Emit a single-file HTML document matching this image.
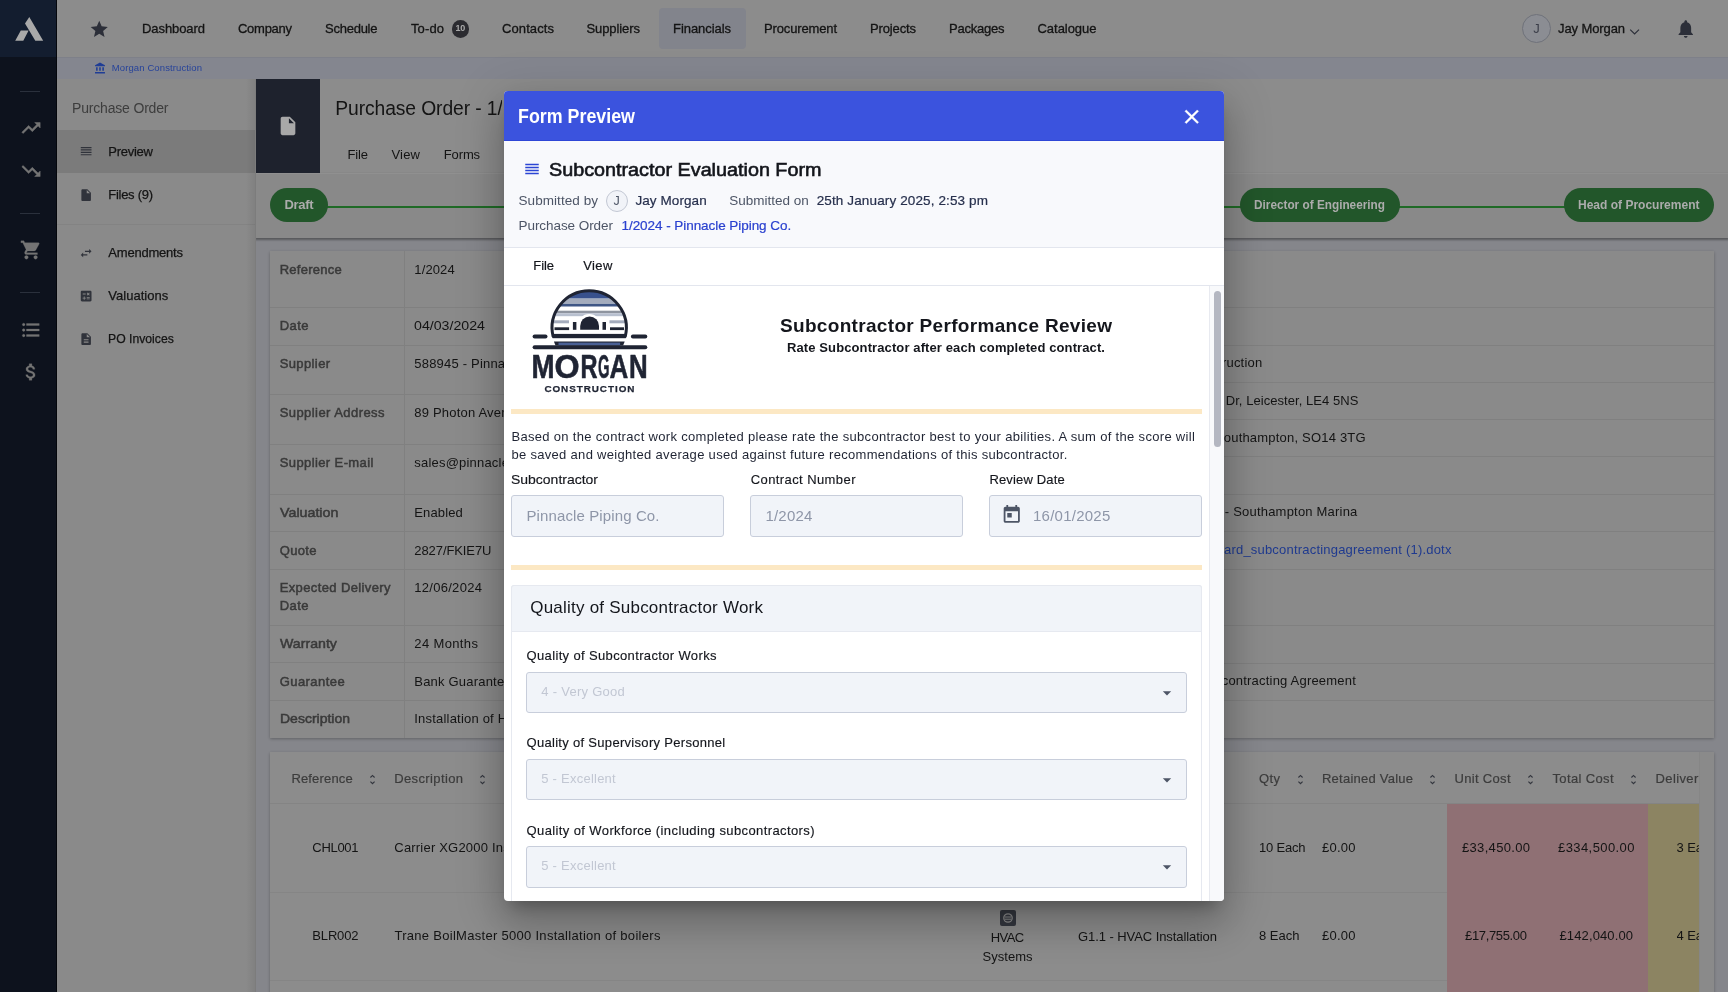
<!DOCTYPE html>
<html lang="en"><head><meta charset="utf-8"><title>Purchase Order - Form Preview</title>
<style>
html,body{margin:0;padding:0;}
body{width:1728px;height:992px;overflow:hidden;position:relative;background:#85868b;font-family:"Liberation Sans", sans-serif;}
#wrap{position:absolute;left:0;top:0;width:1728px;height:992px;overflow:hidden;will-change:transform;opacity:.999;}
.b{position:absolute;box-sizing:border-box;display:block;}
.t{position:absolute;white-space:nowrap;line-height:1;font-family:"Liberation Sans", sans-serif;}
</style></head><body>
<div id="wrap"><div class="b" style="left:255px;top:79px;width:1473px;height:94px;background:#8c8c8c;"></div><span class="t" style="left:335.30px;top:98.77px;font-size:19.3px;color:#141414;letter-spacing:-0.102px;width:167.2px;overflow:hidden;padding:3px 0;margin-top:-3px;">Purchase Order - 1/2024 - Pinnacle Piping Co.</span><span class="t" style="left:347.50px;top:147.85px;font-size:13px;color:#141414;letter-spacing:-0.151px;">File</span><span class="t" style="left:391.50px;top:147.85px;font-size:13px;color:#141414;letter-spacing:0.182px;">View</span><span class="t" style="left:443.80px;top:147.85px;font-size:13px;color:#141414;letter-spacing:-0.136px;">Forms</span><div class="b" style="left:255px;top:173px;width:1473px;height:64.5px;background:#898989;border-top:1px solid #909090;box-shadow:0 1px 2px 0.5px rgba(0,0,0,.35);"></div><div class="b" style="left:300px;top:205.5px;width:1300px;height:2px;background:#1f6a26;"></div><div class="b" style="left:270px;top:187.6px;width:58px;height:34px;background:#22562a;border-radius:17px;"></div><span class="t" style="left:284.50px;top:198.15px;font-size:13px;color:#acacac;letter-spacing:-0.336px;font-weight:700;">Draft</span><div class="b" style="left:1240px;top:187.6px;width:160px;height:34px;background:#22562a;border-radius:17px;"></div><span class="t" style="left:1254.40px;top:198.15px;font-size:13px;color:#acacac;letter-spacing:0.000px;font-weight:700;transform:scaleX(0.9068);transform-origin:0 50%;">Director of Engineering</span><div class="b" style="left:1563.5px;top:187.6px;width:150px;height:34px;background:#22562a;border-radius:17px;"></div><span class="t" style="left:1578.00px;top:198.15px;font-size:13px;color:#acacac;letter-spacing:0.000px;font-weight:700;transform:scaleX(0.9241);transform-origin:0 50%;">Head of Procurement</span><div class="b" style="left:270px;top:251px;width:1443.5px;height:487px;background:#8a8a8a;box-shadow:0 1px 3px rgba(0,0,0,.28);"></div><div class="b" style="left:404px;top:251px;width:1px;height:487px;background:#808080;"></div><div class="b" style="left:270px;top:307px;width:722px;height:1px;background:#808080;"></div><div class="b" style="left:270px;top:344.8px;width:722px;height:1px;background:#808080;"></div><div class="b" style="left:270px;top:394.2px;width:722px;height:1px;background:#808080;"></div><div class="b" style="left:270px;top:444px;width:722px;height:1px;background:#808080;"></div><div class="b" style="left:270px;top:494px;width:722px;height:1px;background:#808080;"></div><div class="b" style="left:270px;top:531.2px;width:722px;height:1px;background:#808080;"></div><div class="b" style="left:270px;top:569px;width:722px;height:1px;background:#808080;"></div><div class="b" style="left:270px;top:625px;width:722px;height:1px;background:#808080;"></div><div class="b" style="left:270px;top:662.2px;width:722px;height:1px;background:#808080;"></div><div class="b" style="left:270px;top:700px;width:722px;height:1px;background:#808080;"></div><div class="b" style="left:992px;top:307px;width:721.5px;height:1px;background:#808080;"></div><div class="b" style="left:992px;top:344.5px;width:721.5px;height:1px;background:#808080;"></div><div class="b" style="left:992px;top:382px;width:721.5px;height:1px;background:#808080;"></div><div class="b" style="left:992px;top:419px;width:721.5px;height:1px;background:#808080;"></div><div class="b" style="left:992px;top:456.3px;width:721.5px;height:1px;background:#808080;"></div><div class="b" style="left:992px;top:494px;width:721.5px;height:1px;background:#808080;"></div><div class="b" style="left:992px;top:531.2px;width:721.5px;height:1px;background:#808080;"></div><div class="b" style="left:992px;top:569px;width:721.5px;height:1px;background:#808080;"></div><div class="b" style="left:992px;top:625px;width:721.5px;height:1px;background:#808080;"></div><div class="b" style="left:992px;top:662.5px;width:721.5px;height:1px;background:#808080;"></div><div class="b" style="left:992px;top:700px;width:721.5px;height:1px;background:#808080;"></div><span class="t" style="left:279.70px;top:262.75px;font-size:13px;color:#3a3a3a;letter-spacing:0.252px;-webkit-text-stroke:0.5px #3a3a3a;">Reference</span><span class="t" style="left:414.30px;top:262.75px;font-size:13px;color:#141414;letter-spacing:0.127px;">1/2024</span><span class="t" style="left:279.70px;top:318.75px;font-size:13px;color:#3a3a3a;letter-spacing:0.410px;-webkit-text-stroke:0.5px #3a3a3a;">Date</span><span class="t" style="left:414.30px;top:318.75px;font-size:13px;color:#141414;letter-spacing:0.000px;transform:scaleX(1.0910);transform-origin:0 50%;">04/03/2024</span><span class="t" style="left:279.70px;top:356.75px;font-size:13px;color:#3a3a3a;letter-spacing:0.385px;-webkit-text-stroke:0.5px #3a3a3a;">Supplier</span><span class="t" style="left:414.30px;top:356.75px;font-size:13px;color:#141414;letter-spacing:0.200px;">588945 - Pinnacle Piping Co.</span><span class="t" style="left:279.70px;top:405.75px;font-size:13px;color:#3a3a3a;letter-spacing:0.435px;-webkit-text-stroke:0.5px #3a3a3a;">Supplier Address</span><span class="t" style="left:414.30px;top:405.75px;font-size:13px;color:#141414;letter-spacing:0.200px;">89 Photon Avenue, Leeds, LS11 8PG</span><span class="t" style="left:279.70px;top:455.75px;font-size:13px;color:#3a3a3a;letter-spacing:0.396px;-webkit-text-stroke:0.5px #3a3a3a;">Supplier E-mail</span><span class="t" style="left:414.30px;top:455.75px;font-size:13px;color:#141414;letter-spacing:0.200px;">sales@pinnaclepiping.co.uk</span><span class="t" style="left:279.70px;top:505.75px;font-size:13px;color:#3a3a3a;letter-spacing:0.000px;-webkit-text-stroke:0.5px #3a3a3a;transform:scaleX(1.0967);transform-origin:0 50%;">Valuation</span><span class="t" style="left:414.30px;top:505.75px;font-size:13px;color:#141414;letter-spacing:0.130px;">Enabled</span><span class="t" style="left:279.70px;top:543.75px;font-size:13px;color:#3a3a3a;letter-spacing:0.345px;-webkit-text-stroke:0.5px #3a3a3a;">Quote</span><span class="t" style="left:414.30px;top:543.75px;font-size:13px;color:#141414;letter-spacing:-0.085px;">2827/FKIE7U</span><span class="t" style="left:279.70px;top:581.25px;font-size:13px;color:#3a3a3a;letter-spacing:0.376px;-webkit-text-stroke:0.5px #3a3a3a;">Expected Delivery</span><span class="t" style="left:414.30px;top:581.25px;font-size:13px;color:#141414;letter-spacing:0.280px;">12/06/2024</span><span class="t" style="left:279.70px;top:636.75px;font-size:13px;color:#3a3a3a;letter-spacing:0.000px;-webkit-text-stroke:0.5px #3a3a3a;transform:scaleX(1.0890);transform-origin:0 50%;">Warranty</span><span class="t" style="left:414.30px;top:636.75px;font-size:13px;color:#141414;letter-spacing:0.362px;">24 Months</span><span class="t" style="left:279.70px;top:674.75px;font-size:13px;color:#3a3a3a;letter-spacing:0.445px;-webkit-text-stroke:0.5px #3a3a3a;">Guarantee</span><span class="t" style="left:414.30px;top:674.75px;font-size:13px;color:#141414;letter-spacing:0.200px;">Bank Guarantee</span><span class="t" style="left:279.70px;top:712.25px;font-size:13px;color:#3a3a3a;letter-spacing:0.000px;-webkit-text-stroke:0.5px #3a3a3a;transform:scaleX(1.0764);transform-origin:0 50%;">Description</span><span class="t" style="left:414.30px;top:712.25px;font-size:13px;color:#141414;letter-spacing:0.200px;">Installation of HVAC plant and pipework</span><span class="t" style="left:279.70px;top:599.45px;font-size:13px;color:#3a3a3a;letter-spacing:0.410px;-webkit-text-stroke:0.5px #3a3a3a;">Date</span><span class="t" style="right:465.80px;top:356.45px;font-size:13px;color:#141414;letter-spacing:0.200px;margin-right:-0.200px;">Morgan Construction</span><span class="t" style="right:369.60px;top:393.75px;font-size:13px;color:#141414;letter-spacing:0.056px;margin-right:-0.056px;">12 Enterprise Dr, Leicester, LE4 5NS</span><span class="t" style="right:362.40px;top:430.95px;font-size:13px;color:#141414;letter-spacing:0.200px;margin-right:-0.200px;">Ocean Village, Southampton, SO14 3TG</span><span class="t" style="right:370.70px;top:505.45px;font-size:13px;color:#141414;letter-spacing:0.200px;margin-right:-0.200px;">SM-0012 - Southampton Marina</span><span class="t" style="right:276.60px;top:543.45px;font-size:13px;color:#1f3a8f;letter-spacing:0.200px;margin-right:-0.200px;">standard_subcontractingagreement (1).dotx</span><span class="t" style="right:372.20px;top:674.45px;font-size:13px;color:#141414;letter-spacing:0.200px;margin-right:-0.200px;">Subcontracting Agreement</span><div class="b" style="left:270px;top:752.4px;width:1443.5px;height:260px;background:#8a8a8a;box-shadow:0 1px 3px rgba(0,0,0,.28);"></div><div class="b" style="left:270px;top:752.4px;width:1429px;height:52px;background:#8c8c8c;border-bottom:1px solid #848484;"></div><div class="b" style="left:1699px;top:752.4px;width:14.5px;height:260px;background:#8a8a8a;border-left:1px solid #868686;"></div><div class="b" style="left:270px;top:804.4px;width:1429px;height:89px;background:#8c8c8c;border-bottom:1px solid #858585;"></div><div class="b" style="left:270px;top:893.4px;width:1429px;height:88px;background:#8c8c8c;border-bottom:1px solid #858585;"></div><div class="b" style="left:270px;top:981.4px;width:1429px;height:20px;background:#8c8c8c;"></div><div class="b" style="left:1447px;top:804px;width:201px;height:200px;background:#8f7074;"></div><div class="b" style="left:1648px;top:804px;width:51px;height:200px;background:#8c8462;"></div><span class="t" style="left:291.40px;top:772.45px;font-size:13px;color:#3c3c3c;letter-spacing:0.164px;-webkit-text-stroke:0.2px #3c3c3c;">Reference</span><svg class="b" style="left:366.00px;top:773.00px;" width="13" height="13" viewBox="0 0 24 24"><path fill="#33363e" d="M12 5.83L15.17 9l1.41-1.41L12 3 7.41 7.59 8.83 9 12 5.83zm0 12.34L8.83 15l-1.41 1.41L12 21l4.59-4.59L15.17 15 12 18.17z"/></svg><span class="t" style="left:394.20px;top:772.45px;font-size:13px;color:#3c3c3c;letter-spacing:0.377px;-webkit-text-stroke:0.2px #3c3c3c;">Description</span><svg class="b" style="left:476.10px;top:773.00px;" width="13" height="13" viewBox="0 0 24 24"><path fill="#33363e" d="M12 5.83L15.17 9l1.41-1.41L12 3 7.41 7.59 8.83 9 12 5.83zm0 12.34L8.83 15l-1.41 1.41L12 21l4.59-4.59L15.17 15 12 18.17z"/></svg><span class="t" style="left:1259.00px;top:772.45px;font-size:13px;color:#3c3c3c;letter-spacing:0.383px;-webkit-text-stroke:0.2px #3c3c3c;">Qty</span><svg class="b" style="left:1293.50px;top:773.00px;" width="13" height="13" viewBox="0 0 24 24"><path fill="#33363e" d="M12 5.83L15.17 9l1.41-1.41L12 3 7.41 7.59 8.83 9 12 5.83zm0 12.34L8.83 15l-1.41 1.41L12 21l4.59-4.59L15.17 15 12 18.17z"/></svg><span class="t" style="left:1322.00px;top:772.45px;font-size:13px;color:#3c3c3c;letter-spacing:0.236px;-webkit-text-stroke:0.2px #3c3c3c;">Retained Value</span><svg class="b" style="left:1426.00px;top:773.00px;" width="13" height="13" viewBox="0 0 24 24"><path fill="#33363e" d="M12 5.83L15.17 9l1.41-1.41L12 3 7.41 7.59 8.83 9 12 5.83zm0 12.34L8.83 15l-1.41 1.41L12 21l4.59-4.59L15.17 15 12 18.17z"/></svg><span class="t" style="left:1454.50px;top:772.45px;font-size:13px;color:#3c3c3c;letter-spacing:0.316px;-webkit-text-stroke:0.2px #3c3c3c;">Unit Cost</span><svg class="b" style="left:1523.50px;top:773.00px;" width="13" height="13" viewBox="0 0 24 24"><path fill="#33363e" d="M12 5.83L15.17 9l1.41-1.41L12 3 7.41 7.59 8.83 9 12 5.83zm0 12.34L8.83 15l-1.41 1.41L12 21l4.59-4.59L15.17 15 12 18.17z"/></svg><span class="t" style="left:1552.50px;top:772.45px;font-size:13px;color:#3c3c3c;letter-spacing:0.354px;-webkit-text-stroke:0.2px #3c3c3c;">Total Cost</span><svg class="b" style="left:1627.00px;top:773.00px;" width="13" height="13" viewBox="0 0 24 24"><path fill="#33363e" d="M12 5.83L15.17 9l1.41-1.41L12 3 7.41 7.59 8.83 9 12 5.83zm0 12.34L8.83 15l-1.41 1.41L12 21l4.59-4.59L15.17 15 12 18.17z"/></svg><div class="b" style="left:1655.5px;top:765px;width:43.5px;height:30px;overflow:hidden;"><span class="t" style="left:0.00px;top:7.45px;font-size:13px;color:#3c3c3c;letter-spacing:0.385px;-webkit-text-stroke:0.2px #3c3c3c;">Delivered</span></div><span class="t" style="left:312.30px;top:840.95px;font-size:13px;color:#141414;letter-spacing:-0.301px;">CHL001</span><span class="t" style="left:394.30px;top:840.95px;font-size:13px;color:#141414;letter-spacing:0.200px;">Carrier XG2000 Installation of chillers</span><span class="t" style="left:1259.00px;top:840.95px;font-size:13px;color:#141414;letter-spacing:-0.201px;">10 Each</span><span class="t" style="left:1322.00px;top:840.95px;font-size:13px;color:#141414;letter-spacing:0.238px;">£0.00</span><span class="t" style="left:1462.00px;top:840.95px;font-size:13px;color:#141414;letter-spacing:0.325px;">£33,450.00</span><span class="t" style="left:1558.00px;top:840.95px;font-size:13px;color:#141414;letter-spacing:0.420px;">£334,500.00</span><div class="b" style="left:1676.5px;top:835px;width:22.5px;height:26px;overflow:hidden;"><span class="t" style="left:0.00px;top:5.95px;font-size:13px;color:#141414;letter-spacing:-0.097px;">3 Each</span></div><span class="t" style="left:312.30px;top:929.45px;font-size:13px;color:#141414;letter-spacing:-0.157px;">BLR002</span><span class="t" style="left:394.40px;top:929.45px;font-size:13px;color:#141414;letter-spacing:0.292px;">Trane BoilMaster 5000 Installation of boilers</span><div class="b" style="left:999.6px;top:909.8px;width:16px;height:16px;background:#33363e;border-radius:2px;"></div><svg class="b" style="left:999.6px;top:909.8px" width="16" height="16" viewBox="0 0 16 16"><circle cx="8" cy="8" r="4.2" fill="none" stroke="#8c8c8c" stroke-width="1.3"/><path d="M5 7h6M5 9.2h6" stroke="#8c8c8c" stroke-width="1"/></svg><span class="t" style="left:990.70px;top:930.65px;font-size:13px;color:#141414;letter-spacing:-0.552px;">HVAC</span><span class="t" style="left:982.60px;top:950.05px;font-size:13px;color:#141414;letter-spacing:0.026px;">Systems</span><span class="t" style="left:1078.00px;top:929.55px;font-size:13px;color:#141414;letter-spacing:-0.072px;">G1.1 - HVAC Installation</span><span class="t" style="left:1259.00px;top:929.45px;font-size:13px;color:#141414;letter-spacing:0.003px;">8 Each</span><span class="t" style="left:1322.00px;top:929.45px;font-size:13px;color:#141414;letter-spacing:0.238px;">£0.00</span><span class="t" style="left:1465.00px;top:929.45px;font-size:13px;color:#141414;letter-spacing:-0.342px;">£17,755.00</span><span class="t" style="left:1559.50px;top:929.45px;font-size:13px;color:#141414;letter-spacing:0.120px;">£142,040.00</span><div class="b" style="left:1676.5px;top:923.5px;width:22.5px;height:26px;overflow:hidden;"><span class="t" style="left:0.00px;top:5.95px;font-size:13px;color:#141414;letter-spacing:-0.097px;">4 Each</span></div><div class="b" style="left:57px;top:58px;width:1671px;height:21px;background:#84868f;"></div><svg class="b" style="left:94.35px;top:61.95px;" width="12.5" height="12.5" viewBox="0 0 24 24"><path fill="#1f3d96" d="M4 10v7h3v-7H4zm6 0v7h3v-7h-3zM2 22h19v-3H2v3zm14-12v7h3v-7h-3zm-4.5-9L2 6v2h19V6l-9.5-5z"/></svg><span class="t" style="left:111.75px;top:63.46px;font-size:9.5px;color:#27439a;letter-spacing:0.112px;">Morgan Construction</span><div class="b" style="left:57px;top:79px;width:198px;height:913px;background:#8a8a8a;"></div><span class="t" style="left:72.00px;top:101.36px;font-size:14px;color:#3d3d3d;letter-spacing:-0.179px;">Purchase Order</span><div class="b" style="left:57px;top:130px;width:198px;height:43px;background:#7b7b7b;"></div><div class="b" style="left:57px;top:223.5px;width:198px;height:1px;background:#838383;"></div><svg class="b" style="left:79.45px;top:144.25px;" width="14.3" height="14.3" viewBox="0 0 24 24"><path fill="#30333b" d="M3 15h18v-2H3v2zm0 4h18v-2H3v2zm0-8h18V9H3v2zm0-6v2h18V5H3z"/></svg><span class="t" style="left:108.30px;top:145.35px;font-size:13px;color:#141414;letter-spacing:-0.275px;-webkit-text-stroke:0.25px #141414;">Preview</span><svg class="b" style="left:79.45px;top:187.75px;" width="14.3" height="14.3" viewBox="0 0 24 24"><path fill="#30333b" d="M6 2c-1.1 0-1.99.9-1.99 2L4 20c0 1.1.89 2 1.99 2H18c1.1 0 2-.9 2-2V8l-6-6H6zm7 7V3.5L18.5 9H13z"/></svg><span class="t" style="left:108.30px;top:187.95px;font-size:13px;color:#141414;letter-spacing:-0.282px;-webkit-text-stroke:0.25px #141414;">Files (9)</span><svg class="b" style="left:79.45px;top:246.10px;" width="14.3" height="14.3" viewBox="0 0 24 24"><path fill="#30333b" d="M6.99 11L3 15l3.99 4v-3H14v-2H6.99v-3zM21 9l-3.99-4v3H10v2h7.01v3L21 9z"/></svg><span class="t" style="left:108.30px;top:246.45px;font-size:13px;color:#141414;letter-spacing:-0.210px;-webkit-text-stroke:0.25px #141414;">Amendments</span><svg class="b" style="left:79.45px;top:288.65px;" width="14.3" height="14.3" viewBox="0 0 24 24"><path fill="#30333b" d="M19 3H5c-1.1 0-2 .9-2 2v14c0 1.1.9 2 2 2h14c1.1 0 2-.9 2-2V5c0-1.1-.9-2-2-2zm-5.97 4.06L14.09 6l1.41 1.41L16.91 6l1.06 1.06-1.41 1.41 1.41 1.41-1.06 1.06-1.41-1.4-1.41 1.41-1.06-1.06 1.41-1.41-1.41-1.42zm-6.78.66h5v1.5h-5v-1.5zM11.5 16h-2v2H8v-2H6v-1.5h2v-2h1.5v2h2V16zm6.5 1.25h-5v-1.5h5v1.5zm0-2.5h-5v-1.5h5v1.5z"/></svg><span class="t" style="left:108.30px;top:289.45px;font-size:13px;color:#141414;letter-spacing:0.028px;-webkit-text-stroke:0.25px #141414;">Valuations</span><svg class="b" style="left:79.45px;top:332.15px;" width="14.3" height="14.3" viewBox="0 0 24 24"><path fill="#30333b" d="M14 2H6c-1.1 0-1.99.9-1.99 2L4 20c0 1.1.89 2 1.99 2H18c1.1 0 2-.9 2-2V8l-6-6zm2 16H8v-2h8v2zm0-4H8v-2h8v2zm-3-5V3.5L18.5 9H13z"/></svg><span class="t" style="left:108.30px;top:332.35px;font-size:13px;color:#141414;letter-spacing:0.000px;-webkit-text-stroke:0.25px #141414;transform:scaleX(0.9387);transform-origin:0 50%;">PO Invoices</span><div class="b" style="left:246px;top:79px;width:9px;height:913px;background:linear-gradient(90deg,rgba(0,0,0,0),rgba(0,0,0,.07));"></div><div class="b" style="left:254.5px;top:79px;width:1.5px;height:913px;background:#7c7c7c;"></div><div class="b" style="left:256px;top:79px;width:64px;height:94px;background:#1e222d;"></div><svg class="b" style="left:277.00px;top:115.00px;" width="22" height="22" viewBox="0 0 24 24"><path fill="#a8a8a8" d="M6 2c-1.1 0-1.99.9-1.99 2L4 20c0 1.1.89 2 1.99 2H18c1.1 0 2-.9 2-2V8l-6-6H6zm7 7V3.5L18.5 9H13z"/></svg><div class="b" style="left:57px;top:0px;width:1671px;height:58px;background:#8c8c8c;border-bottom:1px solid #7e8089;"></div><svg class="b" style="left:89.25px;top:18.55px;" width="20.5" height="20.5" viewBox="0 0 24 24"><path fill="#2c2f39" d="M12 17.27L18.18 21l-1.64-7.03L22 9.24l-7.19-.61L12 2 9.19 8.63 2 9.24l5.46 4.73L5.82 21z"/></svg><div class="b" style="left:659px;top:8px;width:86.5px;height:41px;background:#82848c;border-radius:4px;"></div><span class="t" style="left:142.00px;top:22.05px;font-size:13px;color:#141414;letter-spacing:-0.076px;-webkit-text-stroke:0.3px #141414;">Dashboard</span><span class="t" style="left:238.00px;top:22.05px;font-size:13px;color:#141414;letter-spacing:-0.273px;-webkit-text-stroke:0.3px #141414;">Company</span><span class="t" style="left:325.00px;top:22.05px;font-size:13px;color:#141414;letter-spacing:-0.246px;-webkit-text-stroke:0.3px #141414;">Schedule</span><span class="t" style="left:411.00px;top:22.05px;font-size:13px;color:#141414;letter-spacing:0.117px;-webkit-text-stroke:0.3px #141414;">To-do</span><span class="t" style="left:502.00px;top:22.05px;font-size:13px;color:#141414;letter-spacing:0.098px;-webkit-text-stroke:0.3px #141414;">Contacts</span><span class="t" style="left:586.50px;top:22.05px;font-size:13px;color:#141414;letter-spacing:-0.088px;-webkit-text-stroke:0.3px #141414;">Suppliers</span><span class="t" style="left:673.00px;top:22.05px;font-size:13px;color:#141414;letter-spacing:-0.059px;-webkit-text-stroke:0.3px #141414;">Financials</span><span class="t" style="left:764.00px;top:22.05px;font-size:13px;color:#141414;letter-spacing:-0.142px;-webkit-text-stroke:0.3px #141414;">Procurement</span><span class="t" style="left:870.00px;top:22.05px;font-size:13px;color:#141414;letter-spacing:-0.138px;-webkit-text-stroke:0.3px #141414;">Projects</span><span class="t" style="left:949.00px;top:22.05px;font-size:13px;color:#141414;letter-spacing:-0.228px;-webkit-text-stroke:0.3px #141414;">Packages</span><span class="t" style="left:1037.50px;top:22.05px;font-size:13px;color:#141414;letter-spacing:-0.035px;-webkit-text-stroke:0.3px #141414;">Catalogue</span><div class="b" style="left:451.5px;top:20px;width:17.5px;height:17.5px;background:#2b2b30;border-radius:50%;"></div><span class="t" style="left:455.60px;top:24.30px;font-size:9px;color:#a9a9a9;letter-spacing:-0.416px;font-weight:700;">10</span><div class="b" style="left:1522px;top:14px;width:29px;height:29px;background:#8b8d93;border-radius:50%;border:1px solid #6f727a;"></div><span class="t" style="left:1533.30px;top:22.05px;font-size:13px;color:#3a3d48;letter-spacing:0.000px;">J</span><span class="t" style="left:1558.00px;top:22.05px;font-size:13px;color:#141414;letter-spacing:-0.102px;-webkit-text-stroke:0.3px #141414;">Jay Morgan</span><svg class="b" style="left:1628px;top:26px" width="14" height="12" viewBox="0 0 14 12"><path d="M2.2 3.6L6.6 8l4.4-4.4" fill="none" stroke="#2c2f39" stroke-width="1.2"/></svg><svg class="b" style="left:1675.25px;top:18.25px;" width="21.5" height="21.5" viewBox="0 0 24 24"><path fill="#2c2f39" d="M12 22c1.1 0 2-.9 2-2h-4c0 1.1.89 2 2 2zm6-6v-5c0-3.07-1.64-5.64-4.5-6.32V4c0-.83-.67-1.5-1.5-1.5s-1.5.67-1.5 1.5v.68C7.63 5.36 6 7.92 6 11v5l-2 2v1h16v-1l-2-2z"/></svg><div class="b" style="left:0px;top:0px;width:57px;height:992px;background:#0d121d;border-right:1px solid #05070c;"></div><div class="b" style="left:0px;top:0px;width:56px;height:57.3px;background:#131d2f;"></div><svg class="b" style="left:0;top:0" width="57" height="57" viewBox="0 0 57 57"><path fill="#a9a9a9" d="M29.3 16.9L43.2 40.8H35.3L25 23.6zM20.8 30.5H28.6L23.3 40.8H15.2z"/></svg><div class="b" style="left:20px;top:90.6px;width:20px;height:1px;background:#2a303c;"></div><div class="b" style="left:20px;top:212.8px;width:20px;height:1px;background:#2a303c;"></div><div class="b" style="left:20px;top:291.8px;width:20px;height:1px;background:#2a303c;"></div><svg class="b" style="left:20.00px;top:117.20px;" width="22" height="22" viewBox="0 0 24 24"><path fill="#747474" stroke="#747474" stroke-width="0.5" stroke-linejoin="round" d="M16 6l2.29 2.29-4.88 4.88-4-4L2 16.59 3.41 18l6-6 4 4 6.3-6.29L22 12V6z"/></svg><svg class="b" style="left:20.00px;top:160.30px;" width="22" height="22" viewBox="0 0 24 24"><path fill="#747474" stroke="#747474" stroke-width="0.5" stroke-linejoin="round" d="M16 18l2.29-2.29-4.88-4.88-4 4L2 7.41 3.41 6l6 6 4-4 6.3 6.29L22 12v6z"/></svg><svg class="b" style="left:19.60px;top:239.00px;" width="22" height="22" viewBox="0 0 24 24"><path fill="#747474" stroke="#747474" stroke-width="0.3" stroke-linejoin="round" d="M7 18c-1.1 0-1.99.9-1.99 2S5.9 22 7 22s2-.9 2-2-.9-2-2-2zM1 2v2h2l3.6 7.59-1.35 2.45c-.16.28-.25.61-.25.96 0 1.1.9 2 2 2h12v-2H7.42c-.14 0-.25-.11-.25-.25l.03-.12.9-1.63h7.45c.75 0 1.41-.41 1.75-1.03l3.58-6.49c.08-.14.12-.31.12-.48 0-.55-.45-1-1-1H5.21l-.94-2H1zm16 16c-1.1 0-1.99.9-1.99 2s.89 2 1.99 2 2-.9 2-2-.9-2-2-2z"/></svg><svg class="b" style="left:19.80px;top:318.50px;" width="22" height="22" viewBox="0 0 24 24"><path fill="#747474" stroke="#747474" stroke-width="0.3" stroke-linejoin="round" d="M4 10.5c-.83 0-1.5.67-1.5 1.5s.67 1.5 1.5 1.5 1.5-.67 1.5-1.5-.67-1.5-1.5-1.5zm0-6c-.83 0-1.5.67-1.5 1.5S3.17 7.5 4 7.5 5.5 6.83 5.5 6 4.83 4.5 4 4.5zm0 12c-.83 0-1.5.68-1.5 1.5s.68 1.5 1.5 1.5 1.5-.68 1.5-1.5-.67-1.5-1.5-1.5zM7 19h14v-2H7v2zm0-6h14v-2H7v2zm0-8v2h14V5H7z"/></svg><svg class="b" style="left:19.70px;top:361.20px;" width="22" height="22" viewBox="0 0 24 24"><path fill="#747474" stroke="#747474" stroke-width="0.3" stroke-linejoin="round" d="M11.8 10.9c-2.27-.59-3-1.2-3-2.15 0-1.09 1.01-1.85 2.7-1.85 1.78 0 2.44.85 2.5 2.1h2.21c-.07-1.72-1.12-3.3-3.21-3.81V3h-3v2.16c-1.94.42-3.5 1.68-3.5 3.61 0 2.31 1.91 3.46 4.7 4.13 2.5.6 3 1.48 3 2.41 0 .69-.49 1.79-2.7 1.79-2.06 0-2.87-.92-2.98-2.1h-2.2c.12 2.19 1.76 3.42 3.68 3.83V21h3v-2.15c1.95-.37 3.5-1.5 3.5-3.55 0-2.84-2.43-3.81-4.7-4.4z"/></svg><div class="b" style="left:504px;top:91px;width:720px;height:810px;background:#ffffff;border-radius:4px;box-shadow:0 11px 15px -7px rgba(0,0,0,.26),0 24px 38px 3px rgba(0,0,0,.16),0 9px 46px 8px rgba(0,0,0,.13);"></div><div class="b" style="left:504px;top:91px;width:720px;height:50px;background:#3b53de;border-radius:4px 4px 0 0;border-bottom:1px solid #2e46d6;"></div><span class="t" style="left:518.30px;top:106.23px;font-size:20px;color:#ffffff;letter-spacing:0.000px;font-weight:700;transform:scaleX(0.8920);transform-origin:0 50%;">Form Preview</span><svg class="b" style="left:1179.95px;top:104.50px;" width="23.5" height="23.5" viewBox="0 0 24 24"><path fill="#ffffff" stroke="#ffffff" stroke-width="0.4" stroke-linejoin="round" d="M19 6.41L17.59 5 12 10.59 6.41 5 5 6.41 10.59 12 5 17.59 6.41 19 12 13.41 17.59 19 19 17.59 13.41 12z"/></svg><div class="b" style="left:504px;top:141px;width:720px;height:107px;background:#f8f9fc;border-bottom:1px solid #e3e6ee;"></div><svg class="b" style="left:522.80px;top:160.40px;" width="18" height="18" viewBox="0 0 24 24"><path fill="#2b45d4" d="M3 15h18v-2H3v2zm0 4h18v-2H3v2zm0-8h18V9H3v2zm0-6v2h18V5H3z"/></svg><span class="t" style="left:549.40px;top:160.71px;font-size:18px;color:#14161c;letter-spacing:0.000px;-webkit-text-stroke:0.6px #14161c;transform:scaleX(1.0982);transform-origin:0 50%;">Subcontractor Evaluation Form</span><span class="t" style="left:518.50px;top:194.31px;font-size:13.5px;color:#4d5566;letter-spacing:0.064px;">Submitted by</span><div class="b" style="left:605.8px;top:189.7px;width:22px;height:22px;background:#f1f3f8;border-radius:50%;border:1px solid #c3c8d4;"></div><span class="t" style="left:613.40px;top:194.79px;font-size:12.5px;color:#4d5566;letter-spacing:0.000px;">J</span><span class="t" style="left:635.40px;top:194.31px;font-size:13.5px;color:#27304d;letter-spacing:0.084px;-webkit-text-stroke:0.2px #27304d;">Jay Morgan</span><span class="t" style="left:729.20px;top:194.31px;font-size:13.5px;color:#4d5566;letter-spacing:-0.006px;">Submitted on</span><span class="t" style="left:816.70px;top:194.31px;font-size:13.5px;color:#27304d;letter-spacing:0.127px;-webkit-text-stroke:0.2px #27304d;">25th January 2025, 2:53 pm</span><span class="t" style="left:518.50px;top:219.41px;font-size:13.5px;color:#4d5566;letter-spacing:-0.061px;">Purchase Order</span><span class="t" style="left:621.50px;top:219.41px;font-size:13.5px;color:#2a41cf;letter-spacing:-0.053px;-webkit-text-stroke:0.2px #2a41cf;">1/2024 - Pinnacle Piping Co.</span><div class="b" style="left:504px;top:248px;width:720px;height:38px;background:#ffffff;border-bottom:1px solid #e3e6ee;"></div><span class="t" style="left:533.30px;top:259.25px;font-size:13px;color:#14161c;letter-spacing:-0.084px;-webkit-text-stroke:0.2px #14161c;">File</span><span class="t" style="left:583.30px;top:259.25px;font-size:13px;color:#14161c;letter-spacing:0.349px;-webkit-text-stroke:0.2px #14161c;">View</span><div class="b" style="left:1208.7px;top:286px;width:15.3px;height:615px;background:#f8f9fb;border-left:1px solid #e8eaf0;border-radius:0 0 4px 0;"></div><div class="b" style="left:1213.6px;top:290.8px;width:7.2px;height:156px;background:#b4b7c1;border-radius:4px;"></div><svg class="b" style="left:528px;top:286px" width="124" height="112" viewBox="528 286 124 112">
<defs><clipPath id="dome"><path d="M553.1 336.5A37.1 37.1 0 1 1 625.3 336.5z"/></clipPath></defs>
<g clip-path="url(#dome)">
<rect x="550" y="288" width="80" height="50" fill="#ffffff"/>
<rect x="550" y="288" width="80" height="10.6" fill="#38518d"/>
<rect x="550" y="298.6" width="80" height="5.3" fill="#a4acbd"/>
<rect x="550" y="303.9" width="80" height="2.6" fill="#3f5685"/>
<rect x="550" y="310.7" width="80" height="2.5" fill="#8e949f"/>
<rect x="550" y="313.2" width="80" height="3" fill="#b8c0cf"/>
<rect x="553" y="320.3" width="16" height="3" fill="#a4acbd"/><rect x="609.5" y="320.3" width="16" height="3" fill="#a4acbd"/>
<path d="M577.4 331v-5.1a11.8 11.8 0 0 1 23.6 0v5.1z" fill="#ffffff"/>
</g>
<path d="M553.1 336.5A37.1 37.1 0 1 1 625.3 336.5z" fill="none" stroke="#1f2433" stroke-width="3" stroke-linejoin="round"/>
<rect x="552.6" y="333.9" width="73.2" height="4.3" fill="#1f2433"/>
<path d="M580.2 329.8v-3.9a9.4 9.4 0 0 1 18.8 0v3.9z" fill="#1f2433"/>
<rect x="572.9" y="322" width="3.5" height="7.8" fill="#1f2433"/><rect x="602.5" y="322" width="3.5" height="7.8" fill="#1f2433"/>
<rect x="554.5" y="327.3" width="14.6" height="2.8" fill="#1f2433"/><rect x="610" y="327.3" width="14" height="2.8" fill="#1f2433"/>
<rect x="532.6" y="334.6" width="14.9" height="4" rx="2" fill="#1f2433"/><rect x="630.9" y="334.6" width="16.4" height="4" rx="2" fill="#1f2433"/>
<path d="M553.9 341.6h70.8l-1.6 4h-67.6z" fill="#1f2433"/>
<rect x="558.5" y="342.6" width="61.6" height="3" fill="#4a6196"/>
<rect x="532.6" y="345.2" width="114.7" height="4" rx="2" fill="#1f2433"/>
<text y="378.2" font-family="Liberation Sans, sans-serif" font-weight="700" font-size="32.4" fill="#1f2433" stroke="#1f2433" stroke-width="0.6" stroke-linejoin="round"><tspan x="531.53" textLength="23.05" lengthAdjust="spacingAndGlyphs">M</tspan><tspan x="554.61" textLength="25.07" lengthAdjust="spacingAndGlyphs">O</tspan><tspan x="580.41" textLength="17.01" lengthAdjust="spacingAndGlyphs">R</tspan><tspan x="598.01" textLength="11.52" lengthAdjust="spacingAndGlyphs">G</tspan><tspan x="609.55" textLength="18.76" lengthAdjust="spacingAndGlyphs">A</tspan><tspan x="629.05" textLength="18.68" lengthAdjust="spacingAndGlyphs">N</tspan></text>
<text x="544.4" y="392.1" font-family="Liberation Sans, sans-serif" font-weight="700" font-size="9.9" fill="#1f2433" stroke="#1f2433" stroke-width="0.25" textLength="90" lengthAdjust="spacing">CONSTRUCTION</text>
</svg><span class="t" style="left:780.00px;top:315.82px;font-size:19px;color:#14161c;letter-spacing:0.321px;font-weight:700;">Subcontractor Performance Review</span><span class="t" style="left:787.00px;top:340.95px;font-size:13px;color:#14161c;letter-spacing:0.108px;font-weight:700;">Rate Subcontractor after each completed contract.</span><div class="b" style="left:511px;top:409.3px;width:691px;height:4.4px;background:#fce8c4;"></div><span class="t" style="left:511.40px;top:430.15px;font-size:13px;color:#1f2433;letter-spacing:0.319px;">Based on the contract work completed please rate the subcontractor best to your abilities. A sum of the score will</span><span class="t" style="left:511.40px;top:448.05px;font-size:13px;color:#1f2433;letter-spacing:0.310px;">be saved and weighted average used against future recommendations of this subcontractor.</span><span class="t" style="left:511.30px;top:472.75px;font-size:13px;color:#14161c;letter-spacing:0.000px;-webkit-text-stroke:0.15px #14161c;transform:scaleX(1.0749);transform-origin:0 50%;">Subcontractor</span><div class="b" style="left:511px;top:495.3px;width:212.80000000000007px;height:41.6px;background:#f1f4f9;border:1px solid #c8cedb;border-radius:3px;"></div><span class="t" style="left:526.50px;top:507.67px;font-size:15px;color:#8e96a8;letter-spacing:0.115px;">Pinnacle Piping Co.</span><span class="t" style="left:750.70px;top:472.75px;font-size:13px;color:#14161c;letter-spacing:0.415px;-webkit-text-stroke:0.15px #14161c;">Contract Number</span><div class="b" style="left:750.4px;top:495.3px;width:212.80000000000007px;height:41.6px;background:#f1f4f9;border:1px solid #c8cedb;border-radius:3px;"></div><span class="t" style="left:765.40px;top:507.67px;font-size:15px;color:#8e96a8;letter-spacing:0.222px;">1/2024</span><span class="t" style="left:989.40px;top:472.75px;font-size:13px;color:#14161c;letter-spacing:0.160px;-webkit-text-stroke:0.15px #14161c;">Review Date</span><div class="b" style="left:989.1px;top:495.3px;width:212.9px;height:41.6px;background:#f1f4f9;border:1px solid #c8cedb;border-radius:3px;"></div><span class="t" style="left:1033.00px;top:507.67px;font-size:15px;color:#8e96a8;letter-spacing:0.247px;">16/01/2025</span><svg class="b" style="left:1001.05px;top:504.25px;" width="21.5" height="21.5" viewBox="0 0 24 24"><path fill="#4d5566" d="M19 3h-1V1h-2v2H8V1H6v2H5c-1.11 0-1.99.9-1.99 2L3 19c0 1.1.89 2 2 2h14c1.1 0 2-.9 2-2V5c0-1.1-.9-2-2-2zm0 16H5V8h14v11zM7 10h5v5H7z"/></svg><div class="b" style="left:511px;top:565.4px;width:691px;height:4.4px;background:#fce8c4;"></div><div class="b" style="left:511px;top:584.5px;width:691px;height:316.5px;background:#ffffff;border:1px solid #e6e9f0;border-bottom:none;border-radius:3px 3px 0 0;"></div><div class="b" style="left:511px;top:584.5px;width:691px;height:47px;background:#f1f4f9;border:1px solid #e6e9f0;border-radius:3px 3px 0 0;"></div><span class="t" style="left:530.20px;top:599.00px;font-size:17px;color:#14161c;letter-spacing:0.227px;">Quality of Subcontractor Work</span><span class="t" style="left:526.50px;top:648.90px;font-size:13px;color:#14161c;letter-spacing:0.356px;-webkit-text-stroke:0.15px #14161c;">Quality of Subcontractor Works</span><div class="b" style="left:526.3px;top:671.9px;width:660.3px;height:41.3px;background:#f1f4f9;border:1px solid #c8cedb;border-radius:3px;"></div><span class="t" style="left:541.30px;top:684.85px;font-size:13px;color:#c2c7d3;letter-spacing:0.273px;">4 - Very Good</span><svg class="b" style="left:1157.00px;top:682.50px;" width="20" height="20" viewBox="0 0 24 24"><path fill="#4d5566" d="M7 10l5 5 5-5z"/></svg><span class="t" style="left:526.50px;top:736.35px;font-size:13px;color:#14161c;letter-spacing:0.303px;-webkit-text-stroke:0.15px #14161c;">Quality of Supervisory Personnel</span><div class="b" style="left:526.3px;top:759px;width:660.3px;height:41.3px;background:#f1f4f9;border:1px solid #c8cedb;border-radius:3px;"></div><span class="t" style="left:541.30px;top:771.95px;font-size:13px;color:#c2c7d3;letter-spacing:0.238px;">5 - Excellent</span><svg class="b" style="left:1157.00px;top:769.60px;" width="20" height="20" viewBox="0 0 24 24"><path fill="#4d5566" d="M7 10l5 5 5-5z"/></svg><span class="t" style="left:526.50px;top:823.95px;font-size:13px;color:#14161c;letter-spacing:0.392px;-webkit-text-stroke:0.15px #14161c;">Quality of Workforce (including subcontractors)</span><div class="b" style="left:526.3px;top:846.4px;width:660.3px;height:41.3px;background:#f1f4f9;border:1px solid #c8cedb;border-radius:3px;"></div><span class="t" style="left:541.30px;top:859.35px;font-size:13px;color:#c2c7d3;letter-spacing:0.238px;">5 - Excellent</span><svg class="b" style="left:1157.00px;top:857.00px;" width="20" height="20" viewBox="0 0 24 24"><path fill="#4d5566" d="M7 10l5 5 5-5z"/></svg></div>
</body></html>
